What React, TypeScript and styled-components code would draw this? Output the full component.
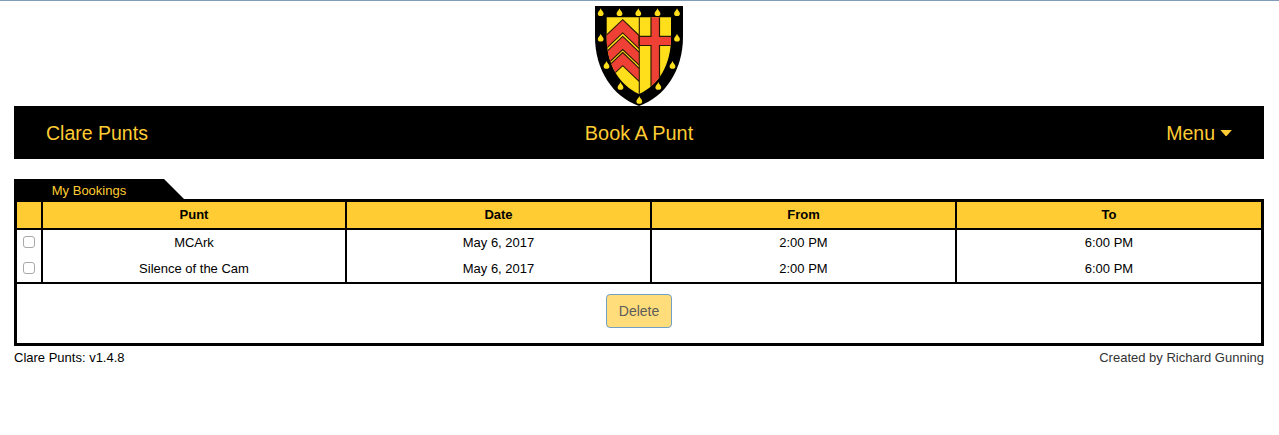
import React from "react";
import styled, { createGlobalStyle } from "styled-components";

const gold = "#ffcc33";

const GlobalStyle = createGlobalStyle`
  * { box-sizing: border-box; }
  body {
    margin: 0;
    background: #fff;
    color: #000;
    font-family: "Liberation Sans", Arial, sans-serif;
    font-size: 13px;
    line-height: 20px;
  }
`;

const Page = styled.div`
  border-top: 1px solid #7f9db9;
  padding: 5px 15px 0 14px;
`;

const Crest = styled.svg`
  display: block;
  width: 88px;
  height: 100px;
  margin: 0 auto;
`;

const Nav = styled.nav`
  display: grid;
  grid-template-columns: 1fr auto 1fr;
  align-items: center;
  height: 53px;
  padding: 0 32px;
  background: #000;
`;

const NavItem = styled.a<{ $end?: boolean; $title?: boolean }>`
  display: flex;
  align-items: center;
  justify-self: ${(p) => (p.$end ? "end" : "start")};
  gap: 5px;
  color: ${gold};
  font-size: ${(p) => (p.$title ? "19.9px" : "19.5px")};
  line-height: 28px;
`;

const Caret = styled.svg`
  width: 12px;
  height: 9px;
`;

const Tab = styled.div`
  width: 170px;
  height: 20px;
  margin-top: 20px;
  padding: 2px 20px 0 0;
  background: #000;
  clip-path: polygon(0 0, 150px 0, 170px 20px, 0 20px);
  color: ${gold};
  text-align: center;
`;

const Panel = styled.section`
  border: 3px solid #000;
`;

const Table = styled.table`
  width: 100%;
  table-layout: fixed;
  border-collapse: separate;
  border-spacing: 0;
`;

const Heading = styled.th<{ $width?: number }>`
  width: ${(p) => (p.$width ? `${p.$width}px` : "auto")};
  height: 28px;
  padding: 0;
  background: ${gold};
  border-bottom: 2px solid #000;
  &:not(:last-child) { border-right: 2px solid #000; }
`;

const Cell = styled.td`
  height: 26px;
  padding: 0;
  text-align: center;
  &:not(:last-child) { border-right: 2px solid #000; }
`;

const Check = styled.input`
  appearance: none;
  display: block;
  width: 12px;
  height: 12px;
  margin: 0 auto 2px;
  border: 1px solid #a9a9a9;
  border-radius: 3px;
  background: #fff;
`;

const Actions = styled.div`
  display: flex;
  justify-content: center;
  height: 61px;
  padding-top: 10px;
  border-top: 2px solid #000;
`;

const DeleteButton = styled.button`
  width: 66px;
  height: 34px;
  padding: 0;
  border: 1px solid #729fc4;
  border-radius: 4px;
  background: #ffdd7a;
  color: #5c5c5c;
  font: 14px/20px "Liberation Sans", Arial, sans-serif;
`;

const Footer = styled.footer`
  display: flex;
  justify-content: space-between;
  padding-top: 2px;
`;

const Credit = styled.span`
  color: #333;
`;

const drops: [number, number][] = [
  [5.7, 6.3], [24.5, 6.3], [43.3, 6.3], [62.5, 6.3], [82, 6.3],
  [5.7, 31.8], [82, 31.8], [11.5, 59], [77.5, 59], [25.5, 80], [63.3, 80], [44.3, 94],
];

const bookings = [
  { punt: "MCArk", date: "May 6, 2017", from: "2:00 PM", to: "6:00 PM" },
  { punt: "Silence of the Cam", date: "May 6, 2017", from: "2:00 PM", to: "6:00 PM" },
];

function Shield() {
  return (
    <Crest viewBox="0 0 88 100">
      <defs>
        <clipPath id="field">
          <path d="M11.7 11.3H76V32C76 58 64 79 44 88C24 79 11.7 58 11.7 32Z" />
        </clipPath>
        <clipPath id="dexter">
          <path d="M11 11H44V90H11Z" />
        </clipPath>
      </defs>
      <path d="M0 0H88V31C88 64 70 91 44 100C18 91 0 64 0 31Z" fill="#000" />
      <g clipPath="url(#field)">
        <path d="M11 11H77V90H11Z" fill="#ffdf1b" />
        <g clipPath="url(#dexter)" fill="#ee4035" stroke="#2a1a00" strokeWidth="1.1">
          {[13.7, 30.4, 46.5].map((y) => (
            <path key={y} d={`M27.7 ${y}L46 ${y + 17.6}V${y + 30.6}L27.7 ${y + 13.2}L9 ${y + 31}V${y + 17.8}Z`} />
          ))}
        </g>
        <path
          d="M56 10H64.5V30.3H78V39.5H64.5V92H56V39.5H44V30.3H56Z"
          fill="#ee4035"
          stroke="#2a1a00"
          strokeWidth="1.2"
        />
        <path d="M44.3 11V90" stroke="#2a1a00" strokeWidth="1.1" />
      </g>
      {drops.map(([x, y]) => (
        <path
          key={`${x}-${y}`}
          transform={`translate(${x} ${y})`}
          d="M0-4C.5-2 2.9-.5 2.9 1.2A2.9 2.6 0 0 1-2.9 1.2C-2.9-.5-.5-2 0-4Z"
          fill="#ffdf1b"
        />
      ))}
    </Crest>
  );
}

export default function App() {
  return (
    <>
      <GlobalStyle />
      <Page>
        <Shield />
        <Nav>
          <NavItem>Clare Punts</NavItem>
          <NavItem $title>Book A Punt</NavItem>
          <NavItem $end>
            Menu
            <Caret viewBox="0 0 12 9"><path d="M.4 2H11.9L6.8 7.7Q6.1 8.4 5.4 7.7Z" fill={gold} /></Caret>
          </NavItem>
        </Nav>
        <Tab>My Bookings</Tab>
        <Panel>
          <Table>
            <thead>
              <tr>
                <Heading $width={26} />
                <Heading $width={304}>Punt</Heading>
                <Heading $width={305}>Date</Heading>
                <Heading $width={305}>From</Heading>
                <Heading>To</Heading>
              </tr>
            </thead>
            <tbody>
              {bookings.map((b) => (
                <tr key={b.punt}>
                  <Cell><Check type="checkbox" /></Cell>
                  <Cell>{b.punt}</Cell>
                  <Cell>{b.date}</Cell>
                  <Cell>{b.from}</Cell>
                  <Cell>{b.to}</Cell>
                </tr>
              ))}
            </tbody>
          </Table>
          <Actions>
            <DeleteButton disabled>Delete</DeleteButton>
          </Actions>
        </Panel>
        <Footer>
          <span>Clare Punts: v1.4.8</span>
          <Credit>Created by Richard Gunning</Credit>
        </Footer>
      </Page>
    </>
  );
}
